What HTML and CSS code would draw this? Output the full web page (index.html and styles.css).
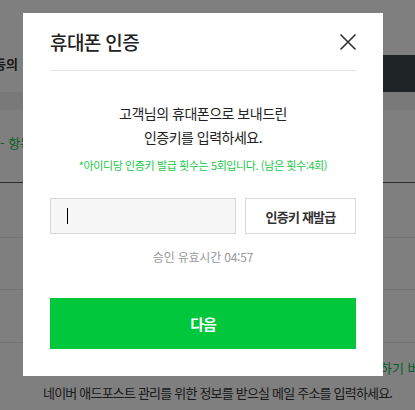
FILE: index.html
```html
<!DOCTYPE html>
<html lang="ko">
<head>
<meta charset="utf-8">
<title>휴대폰 인증</title>
<link rel="stylesheet" href="styles.css">
</head>
<body>
<div class="page">
  <div class="tabs">
    <div class="tab tab-left">등의</div>
    <div class="tab tab-active">저작권 정책</div>
  </div>
  <div class="band"></div>
  <div class="notice-row">- 항목은 필수 입력 사항입니다.</div>
  <div class="field-row r1"></div>
  <div class="field-row r2"></div>
  <div class="field-row r3"></div>
  <div class="green-row">하기 버튼을</div>
  <div class="desc">네이버 애드포스트 관리를 위한 정보를 받으실 메일 주소를 입력하세요.</div>
</div>

<div class="overlay">
  <div class="modal">
    <div class="modal-head">
      <h2 class="modal-title">휴대폰 인증</h2>
      <button class="close" type="button" aria-label="닫기">
        <svg width="18" height="18" viewBox="0 0 18 18"><path d="M1.5 1.5 L16.5 16.5 M16.5 1.5 L1.5 16.5" stroke="#333" stroke-width="1.6" fill="none"/></svg>
      </button>
    </div>
    <div class="modal-body">
      <p class="guide">고객님의 휴대폰으로 보내드린<br>인증키를 입력하세요.</p>
      <p class="limit">*아이디당 인증키 발급 횟수는 5회입니다. (남은 횟수:4회)</p>
      <div class="key-row">
        <div class="key-input"><span class="caret"></span></div>
        <button class="resend" type="button">인증키 재발급</button>
      </div>
      <p class="timer">승인 유효시간 04:57</p>
      <button class="next" type="button">다음</button>
    </div>
  </div>
</div>
</body>
</html>
```

FILE: styles.css
```css
* { box-sizing: border-box; margin: 0; padding: 0; }
html, body { width: 415px; height: 410px; overflow: hidden; }
body {
  position: relative;
  background: #fff;
  font-family: "Noto Sans CJK KR", "Noto Sans", sans-serif;
  color: #333;
}

/* background page */
.page { width: 415px; }
.tabs { display: flex; margin-top: 55px; height: 37px; }
.tab {
  flex: 1;
  font-size: 13px;
  font-weight: 700;
  line-height: 16px;
  padding-top: 1px;
  white-space: nowrap;
  overflow: hidden;
}
.tab-left { text-indent: -6px; color: #333; }
.tab-active { background: #3d464d; color: #fff; padding-left: 149px; }
.band { height: 18px; background: #f2f2f2; }
.notice-row {
  height: 73px;
  padding-top: 23px;
  font-size: 13px;
  line-height: 20px;
  color: #10c050;
  border-bottom: 1px solid #555;
  white-space: nowrap;
}
.field-row { border-bottom: 1px solid #e8e8e8; }
.r1 { height: 55px; }
.r2 { height: 52px; }
.r3 { height: 53px; }
.green-row {
  padding: 15px 0 0 380px;
  height: 40px;
  font-size: 13px;
  line-height: 20px;
  color: #10c050;
  white-space: nowrap;
  overflow: hidden;
}
.desc {
  padding-left: 43px;
  font-size: 13px;
  line-height: 20px;
  letter-spacing: -0.8px;
  color: #333;
  white-space: nowrap;
}

/* overlay + modal */
.overlay {
  position: fixed;
  inset: 0;
  background: rgba(0, 0, 0, 0.5);
  padding: 13px 0 0 23px;
}
.modal {
  width: 360px;
  background: #fff;
  padding: 0 27px 27px;
}
.modal-head {
  display: flex;
  justify-content: space-between;
  align-items: center;
  padding: 15px 0 14px;
  border-bottom: 1px solid #e5e5e5;
}
.modal-title {
  font-size: 19px;
  font-weight: 500;
  line-height: 28px;
  letter-spacing: -0.6px;
  color: #222;
}
.close {
  display: flex;
  width: 18px;
  height: 18px;
  margin-right: -1px;
  border: 0;
  background: none;
}
.modal-body { text-align: center; }
.guide {
  margin-top: 30px;
  font-size: 14px;
  line-height: 24px;
  letter-spacing: -0.5px;
  color: #222;
}
.limit {
  margin-top: 8px;
  font-size: 11px;
  line-height: 16px;
  letter-spacing: -0.4px;
  color: #22c74a;
}
.key-row {
  display: flex;
  gap: 9px;
  margin-top: 25px;
  height: 36px;
}
.key-input {
  width: 186px;
  background: #f7f7f7;
  border: 1px solid #d3d6da;
  display: flex;
  align-items: center;
  padding-left: 16px;
}
.caret { width: 1px; height: 16px; background: #000; }
.resend {
  flex: 1;
  background: #fff;
  border: 1px solid #d5d8dc;
  font-family: inherit;
  font-size: 13px;
  font-weight: 700;
  letter-spacing: -0.8px;
  color: #333;
}
.timer {
  margin-top: 14px;
  font-size: 12px;
  line-height: 18px;
  letter-spacing: -0.2px;
  color: #999;
}
.next {
  display: block;
  width: 100%;
  height: 51px;
  margin-top: 32px;
  background: #00c73c;
  color: #fff;
  border: 0;
  font-family: inherit;
  font-size: 15px;
  font-weight: 700;
  letter-spacing: -1px;
}
```
